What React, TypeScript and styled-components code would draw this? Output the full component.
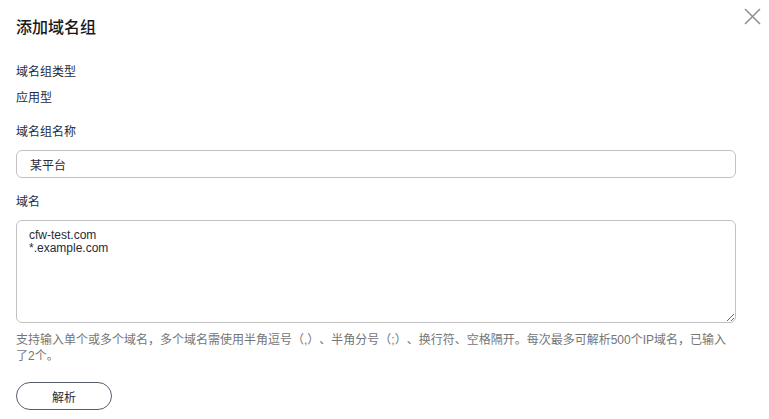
import React from "react";
import styled, { createGlobalStyle } from "styled-components";

const Global = createGlobalStyle`
  html, body { margin: 0; padding: 0; background: #fff; }
  body { font-family: "Liberation Sans", Arial, "Noto Sans CJK SC", sans-serif; color: #252b3a; }
  * { box-sizing: border-box; }
`;

const Dialog = styled.div`
  position: relative;
  width: 769px;
  height: 419px;
  padding: 14px 33px 0 16px;
  display: flex;
  flex-direction: column;
`;

const Title = styled.h2`
  margin: 0;
  font-size: 16px;
  line-height: 24px;
  font-weight: 500;
  color: #191919;
  font-family: "Noto Sans CJK SC", sans-serif;
`;

const Close = styled.button`
  position: absolute;
  top: 8px;
  right: 8px;
  width: 17px;
  height: 17px;
  padding: 0;
  border: none;
  background: transparent;
  display: flex;
  cursor: pointer;
`;

const Field = styled.div<{ $top: number }>`
  margin-top: ${(p) => p.$top}px;
  display: flex;
  flex-direction: column;
`;

const Label = styled.div`
  font-size: 12px;
  line-height: 18px;
  color: #252b3a;
  font-family: "Liberation Sans", "Noto Sans CJK SC", sans-serif;
`;

const Value = styled.div`
  margin-top: 8px;
  font-size: 12px;
  line-height: 18px;
  color: #252b3a;
  font-family: "Liberation Sans", "Noto Sans CJK SC", sans-serif;
`;

const Input = styled.input`
  margin-top: 9px;
  width: 720px;
  height: 28px;
  border: 1px solid #c2c2c2;
  border-radius: 6px;
  padding: 0 13px;
  font-size: 12px;
  color: #252b3a;
  font-family: "Liberation Sans", "Noto Sans CJK SC", sans-serif;
  outline: none;
`;

const TextArea = styled.textarea`
  margin-top: 9px;
  width: 720px;
  height: 103px;
  border: 1px solid #c2c2c2;
  border-radius: 6px;
  padding: 8px 12px;
  font-size: 12px;
  line-height: 13px;
  color: #252b3a;
  font-family: "Liberation Sans", "Noto Sans CJK SC", sans-serif;
  outline: none;
  resize: vertical;
  display: block;
`;

const Help = styled.p`
  margin: 9px 0 0;
  max-width: 720px;
  font-size: 12px;
  line-height: 16px;
  color: #757575;
  font-family: "Liberation Sans", "Noto Sans CJK SC", sans-serif;
  text-spacing-trim: space-all;
`;

const Button = styled.button`
  margin-top: 18px;
  width: 96px;
  height: 28px;
  border: 1px solid #575d6c;
  border-radius: 14px;
  background: #fff;
  font-size: 12px;
  color: #252b3a;
  font-family: "Liberation Sans", "Noto Sans CJK SC", sans-serif;
  cursor: pointer;
  align-self: flex-start;
`;

export default function App() {
  return (
    <>
      <Global />
      <Dialog>
        <Title>添加域名组</Title>
        <Close aria-label="关闭">
          <svg width="17" height="17" viewBox="0 0 17 17">
            <path d="M1 1L16 16M16 1L1 16" stroke="#8a8e99" strokeWidth="1.5" fill="none" />
          </svg>
        </Close>
        <Field $top={25}>
          <Label>域名组类型</Label>
          <Value>应用型</Value>
        </Field>
        <Field $top={16}>
          <Label>域名组名称</Label>
          <Input defaultValue="某平台" />
        </Field>
        <Field $top={15}>
          <Label>域名</Label>
          <TextArea defaultValue={"cfw-test.com\n*.example.com"} />
        </Field>
        <Help>
          支持输入单个或多个域名，多个域名需使用半角逗号（,）、半角分号（;）、换行符、空格隔开。每次最多可解析500个IP域名，已输入了2个。
        </Help>
        <Button>解析</Button>
      </Dialog>
    </>
  );
}
